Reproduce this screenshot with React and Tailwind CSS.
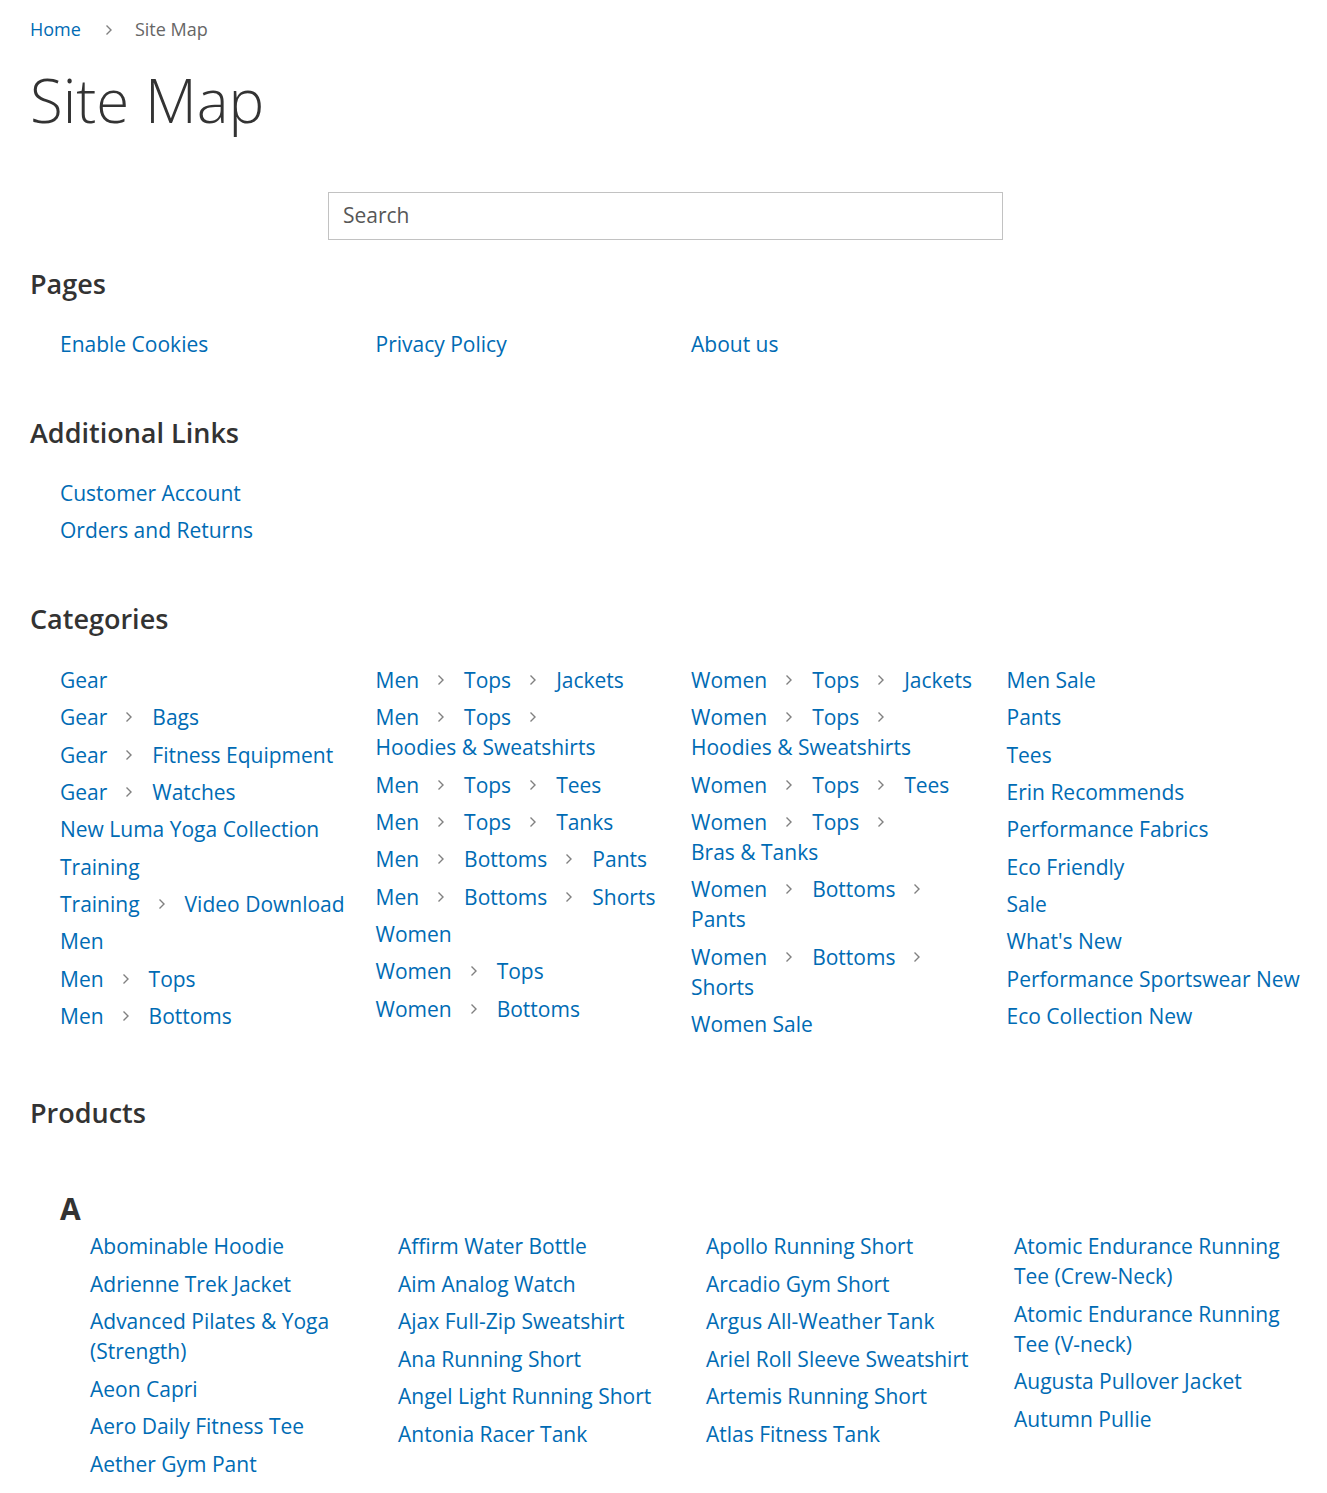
import React from "react";

const LINK = "text-[#006bb4] hover:underline";

const pages = ["Enable Cookies", "Privacy Policy", "About us"];
const additional = ["Customer Account", "Orders and Returns"];

const categories = [
  [
    ["Gear"],
    ["Gear", "Bags"],
    ["Gear", "Fitness Equipment"],
    ["Gear", "Watches"],
    ["New Luma Yoga Collection"],
    ["Training"],
    ["Training", "Video Download"],
    ["Men"],
    ["Men", "Tops"],
    ["Men", "Bottoms"],
  ],
  [
    ["Men", "Tops", "Jackets"],
    ["Men", "Tops", "Hoodies & Sweatshirts"],
    ["Men", "Tops", "Tees"],
    ["Men", "Tops", "Tanks"],
    ["Men", "Bottoms", "Pants"],
    ["Men", "Bottoms", "Shorts"],
    ["Women"],
    ["Women", "Tops"],
    ["Women", "Bottoms"],
  ],
  [
    ["Women", "Tops", "Jackets"],
    ["Women", "Tops", "Hoodies & Sweatshirts"],
    ["Women", "Tops", "Tees"],
    ["Women", "Tops", "Bras & Tanks"],
    ["Women", "Bottoms", "Pants"],
    ["Women", "Bottoms", "Shorts"],
    ["Women Sale"],
  ],
  [
    ["Men Sale"],
    ["Pants"],
    ["Tees"],
    ["Erin Recommends"],
    ["Performance Fabrics"],
    ["Eco Friendly"],
    ["Sale"],
    ["What's New"],
    ["Performance Sportswear New"],
    ["Eco Collection New"],
  ],
];

const products = [
  ["Abominable Hoodie", "Adrienne Trek Jacket", "Advanced Pilates & Yoga (Strength)", "Aeon Capri", "Aero Daily Fitness Tee", "Aether Gym Pant"],
  ["Affirm Water Bottle", "Aim Analog Watch", "Ajax Full-Zip Sweatshirt", "Ana Running Short", "Angel Light Running Short", "Antonia Racer Tank"],
  ["Apollo Running Short", "Arcadio Gym Short", "Argus All-Weather Tank", "Ariel Roll Sleeve Sweatshirt", "Artemis Running Short", "Atlas Fitness Tank"],
  ["Atomic Endurance Running Tee (Crew-Neck)", "Atomic Endurance Running Tee (V-neck)", "Augusta Pullover Jacket", "Autumn Pullie"],
];

function Chevron() {
  return (
    <svg width="8" height="12" viewBox="0 0 8 12" className="block" aria-hidden="true">
      <path d="M1.5 1.5 L6 6 L1.5 10.5" fill="none" stroke="#808080" strokeWidth="1.4" />
    </svg>
  );
}

function Heading({ children }) {
  return <h2 className="text-[27px] leading-[36px] font-semibold text-[#333]">{children}</h2>;
}

function Path({ parts }) {
  return (
    <li className="mb-[7.33px] leading-[30px]">
      {parts.map((p, i) => (
        <React.Fragment key={i}>
          <a href="#" className={LINK + " inline-block"}>{p}</a>
          {i < parts.length - 1 && (
            <span className="inline-block ml-[18px] mr-[19px] h-[12px] leading-none align-[2px]"><Chevron /></span>
          )}
        </React.Fragment>
      ))}
    </li>
  );
}

export default function App() {
  return (
    <div className="min-h-screen bg-white text-[#333] font-['Open_Sans',sans-serif] px-[30px] pb-[20px]">
      <nav className="pt-[16px] text-[18px] leading-[27px] flex items-center">
        <a href="#" className={LINK}>Home</a>
        <span className="ml-[24px] mr-[22px] flex items-center"><Chevron /></span>
        <span className="text-[#666]">Site Map</span>
      </nav>

      <h1 className="mt-[21px] text-[60px] leading-[72px] font-light text-[#333]">Site Map</h1>

      <div className="mt-[56px] ml-[298px] w-[675px] h-[48px] border border-[#c2c2c2] flex items-center px-[14px]">
        <input
          placeholder="Search"
          className="w-full outline-none text-[21px] text-[#333] placeholder:text-[#575757] bg-transparent"
        />
      </div>

      <section className="mt-[26px]">
        <Heading>Pages</Heading>
        <ul className="mt-[27px] pl-[30px] grid grid-cols-[repeat(4,315.5px)] text-[21px]">
          {pages.map((p) => (
            <li key={p} className="mb-[7.5px] leading-[30px]"><a href="#" className={LINK}>{p}</a></li>
          ))}
        </ul>
      </section>

      <section className="mt-[48px]">
        <Heading>Additional Links</Heading>
        <ul className="mt-[27px] pl-[30px] text-[21px]">
          {additional.map((p) => (
            <li key={p} className="mb-[7.5px] leading-[30px]"><a href="#" className={LINK}>{p}</a></li>
          ))}
        </ul>
      </section>

      <section className="mt-[56px]">
        <Heading>Categories</Heading>
        <div className="mt-[28px] pl-[30px] grid grid-cols-[repeat(4,315.5px)] text-[21px]">
          {categories.map((col, ci) => (
            <ul key={ci} className="pr-[14px]">
              {col.map((parts, i) => <Path key={i} parts={parts} />)}
            </ul>
          ))}
        </div>
      </section>

      <section className="mt-[49px]">
        <Heading>Products</Heading>
        <div className="mt-[60px] pl-[30px]">
          <h3 className="text-[30px] leading-[36px] font-bold text-[#333]">A</h3>
          <div className="mt-[4px] pl-[30px] grid grid-cols-[repeat(4,308px)] text-[21px]">
            {products.map((col, ci) => (
              <ul key={ci} className="pr-[14px]">
                {col.map((p) => (
                  <li key={p} className="mb-[7.5px] leading-[30px]"><a href="#" className={LINK}>{p}</a></li>
                ))}
              </ul>
            ))}
          </div>
        </div>
      </section>
    </div>
  );
}
